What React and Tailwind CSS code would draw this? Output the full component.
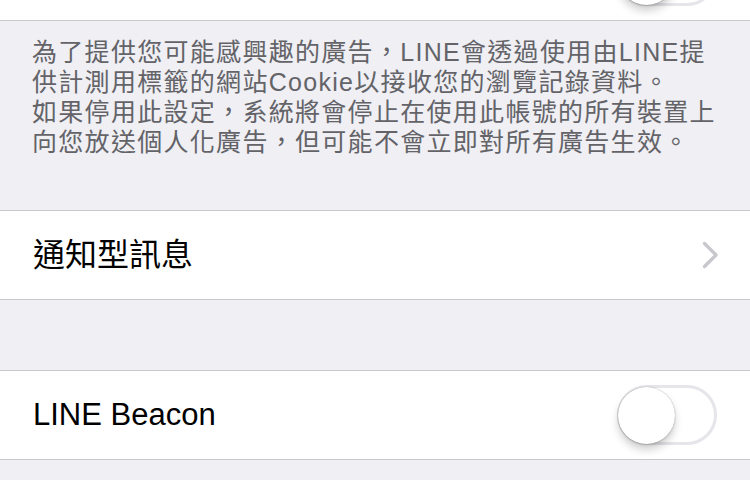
const FONT = "font-['Liberation_Sans','Noto_Sans_CJK_TC',sans-serif]";

const DESC_LINES = [
  "為了提供您可能感興趣的廣告，LINE會透過使用由LINE提",
  "供計測用標籤的網站Cookie以接收您的瀏覽記錄資料。",
  "如果停用此設定，系統將會停止在使用此帳號的所有裝置上",
  "向您放送個人化廣告，但可能不會立即對所有廣告生效。",
];

function Toggle() {
  return (
    <div className="relative w-[100px] h-[60px] rounded-full border-[3px] border-[#e5e5ea] bg-white">
      <div className="absolute left-[-2px] top-[-1px] w-[57px] h-[57px] rounded-full bg-white shadow-[0_6px_8px_rgba(0,0,0,0.18),0_0_1px_rgba(0,0,0,0.35),0_1px_3px_rgba(0,0,0,0.12)]" />
    </div>
  );
}

function Chevron() {
  return (
    <svg width="17" height="28" viewBox="0 0 17 28" fill="none">
      <path d="M2.5 2.5 L14 14 L2.5 25.5" stroke="#c7c7cc" strokeWidth="3.2" strokeLinecap="round" strokeLinejoin="round" />
    </svg>
  );
}

export default function App() {
  return (
    <div className={`w-[750px] h-[480px] overflow-hidden bg-[#efeff4] ${FONT}`}>
      {/* top row, mostly scrolled off */}
      <div className="-mt-[69px] h-[90px] bg-white border-b border-[#c8c7cc] flex items-center justify-end pr-[33px]">
        <Toggle />
      </div>

      {/* footer text */}
      <div className="pl-[32px] pt-[16px] pb-[53px] text-[#636368] text-[25px] tracking-[1.3px] leading-[30px]">
        {DESC_LINES.map((l) => (
          <div key={l} className="whitespace-nowrap">{l}</div>
        ))}
      </div>

      {/* notification row */}
      <div className="h-[90px] bg-white border-y border-[#c8c7cc] flex items-center justify-between pl-[33px] pr-[31px]">
        <span className="text-[32px] text-black">通知型訊息</span>
        <Chevron />
      </div>

      <div className="h-[70px]" />

      {/* beacon row */}
      <div className="h-[90px] bg-white border-y border-[#c8c7cc] flex items-center justify-between pl-[33px] pr-[33px]">
        <span className="text-[31px] text-black">LINE Beacon</span>
        <Toggle />
      </div>
    </div>
  );
}
